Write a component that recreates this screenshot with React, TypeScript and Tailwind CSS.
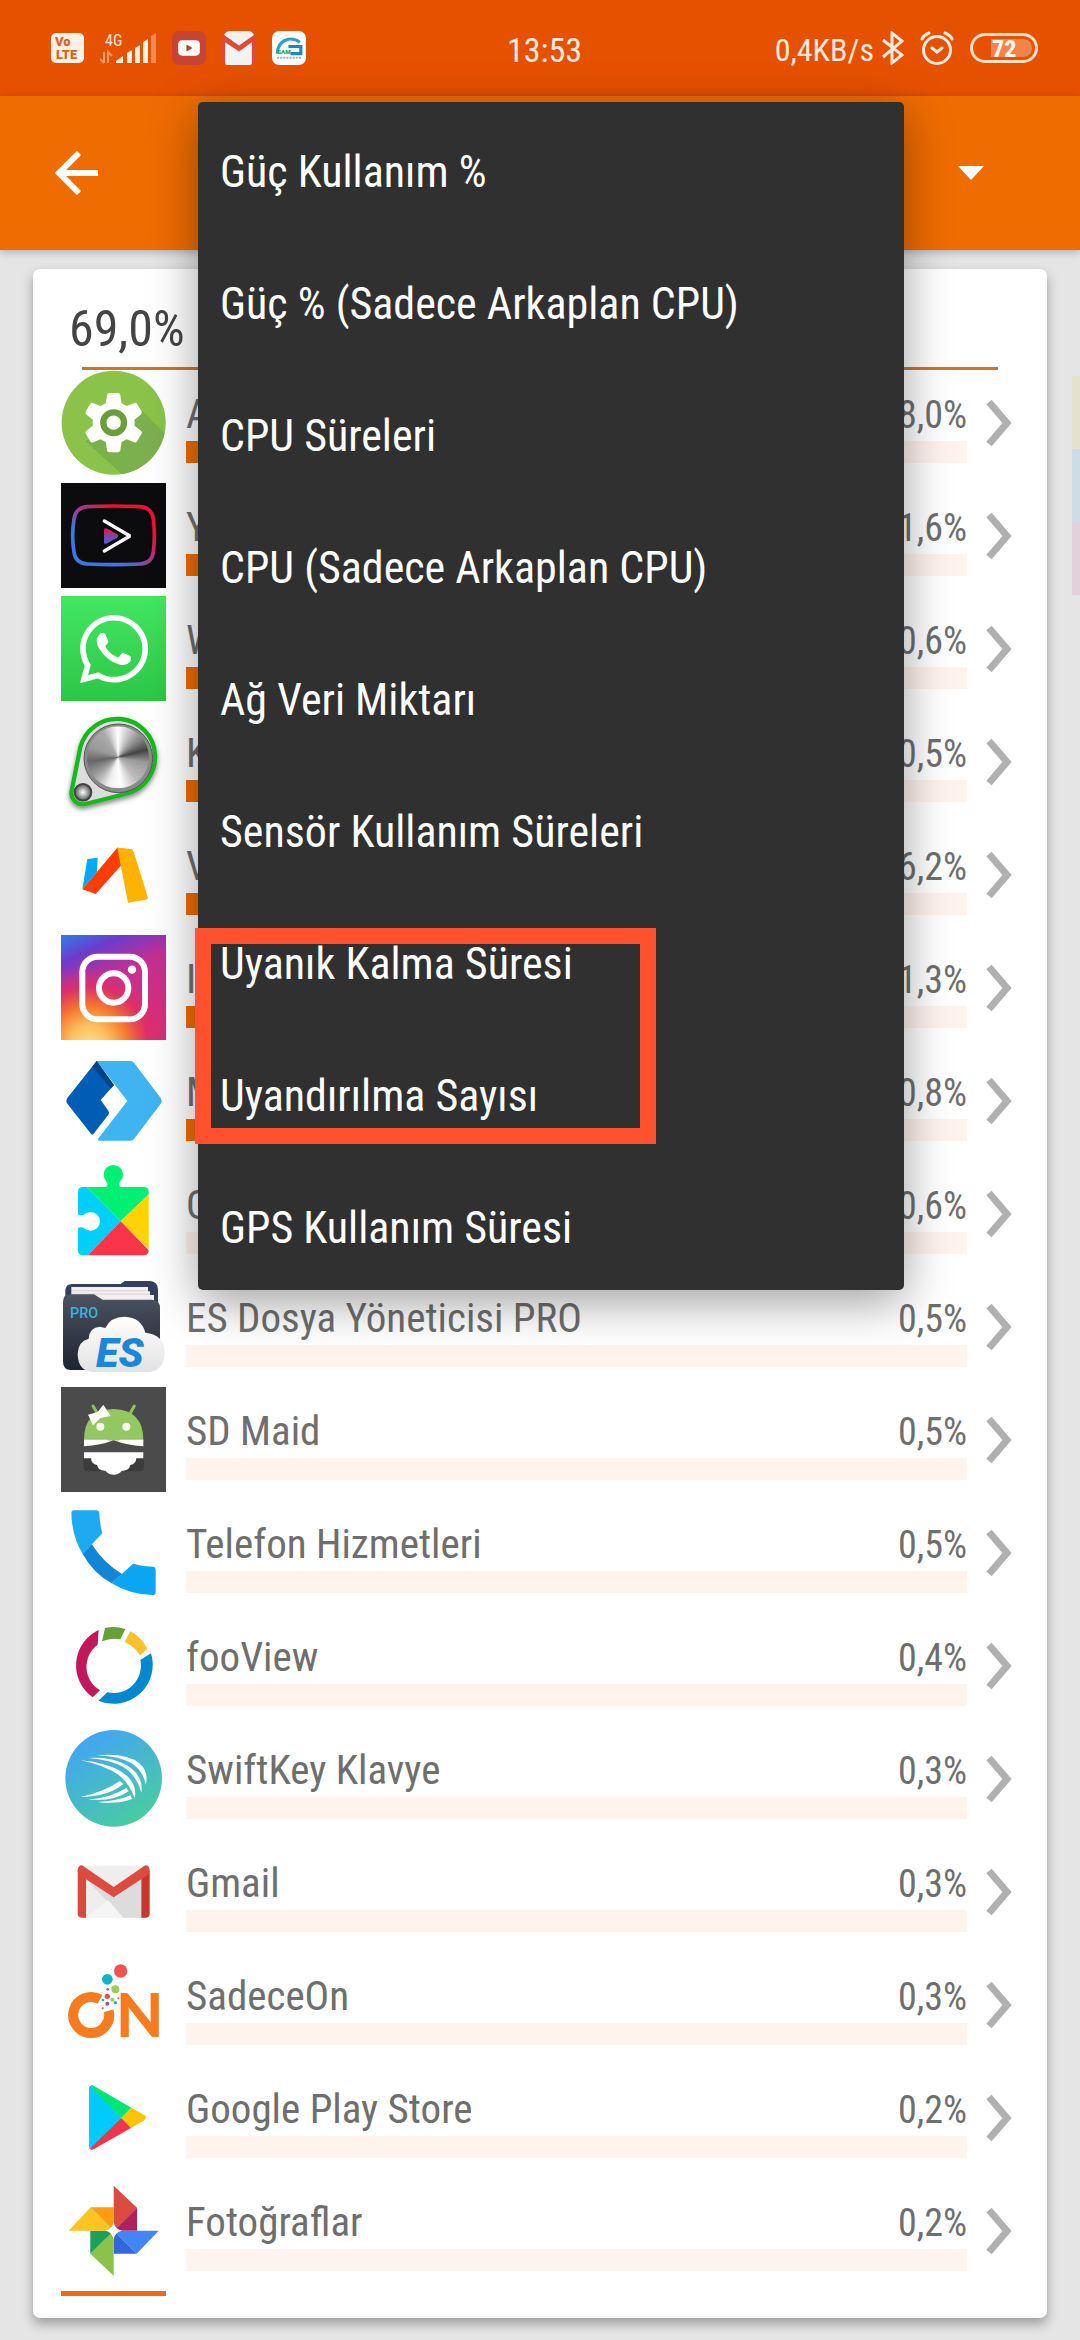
import { ReactNode } from "react";
import { FaWhatsapp } from "react-icons/fa";

interface AppUsage {
    name: string;
    percent: string;
    bar: number;
    icon: ReactNode;
}

function Icon({ y, children }: { y: number; children: ReactNode }) {
    return (
        <svg className="size-[105px] shrink-0" viewBox={`183 ${y} 315 315`} aria-hidden="true">
            {children}
        </svg>
    );
}

const SettingsIcon = (
    <Icon y={360}>
        <defs>
            <clipPath id="gear-clip"><circle cx="341" cy="518" r="156" /></clipPath>
        </defs>
        <circle cx="341" cy="518" r="156" fill="#8bc34a" />
        <path d="M424 480 L540 596 L430 730 L256 574 Z" fill="#7cb04c" clipPath="url(#gear-clip)" />
        <g fill="#fff">
            <circle cx="341" cy="518" r="63" />
            {[0, 60, 120, 180, 240, 300].map(a => (
                <path key={a} d="M328 429 H354 Q360 429 361 435 L366 470 H316 L321 435 Q322 429 328 429 Z" transform={`rotate(${a} 341 518)`} />
            ))}
        </g>
        <circle cx="341" cy="518" r="31" fill="#fff" stroke="#689f38" strokeWidth="19" />
    </Icon>
);

const VancedIcon = (
    <Icon y={699}>
        <defs>
            <linearGradient id="vanced" x1="0" y1="1" x2="1" y2="0">
                <stop offset="0.3" stopColor="#3b78e7" />
                <stop offset="0.5" stopColor="#9b3d92" />
                <stop offset="0.75" stopColor="#ee1133" />
            </linearGradient>
            <linearGradient id="vanced-play" x1="0" y1="1" x2="0" y2="0">
                <stop offset="0.1" stopColor="#3f62e0" />
                <stop offset="0.9" stopColor="#d81f55" />
            </linearGradient>
        </defs>
        <rect x="183" y="699" width="315" height="315" fill="#0c0c0f" />
        <path d="M262 770 Q341 766 420 770 Q456 773 460 808 Q466 857 460 906 Q456 940 420 942 Q341 946 262 942 Q226 940 222 906 Q214 857 222 808 Q226 773 262 770 Z" fill="none" stroke="url(#vanced)" strokeWidth="11" />
        <path d="M312 838 Q314 832 322 836 L352 853 Q357 858 352 863 L322 880 Q314 884 312 878 Z" fill="url(#vanced-play)" />
        <path d="M313 813 L390 858 L313 903" fill="none" stroke="#fff" strokeWidth="10" strokeLinecap="round" strokeLinejoin="bevel" />
    </Icon>
);

const WhatsAppIcon = (
    <div className="flex size-[105px] shrink-0 items-center justify-center bg-linear-to-b from-[#43e760] to-[#2bc746]">
        <FaWhatsapp className="size-[78px] text-white" aria-hidden="true" />
    </div>
);

const KnobIcon = (
    <Icon y={27}>
        <defs>
            <filter id="knob-shadow" x="-20%" y="-20%" width="140%" height="140%">
                <feDropShadow dx="0" dy="8" stdDeviation="8" floodColor="#000" floodOpacity="0.5" />
            </filter>
            <radialGradient id="knob-small">
                <stop offset="0" stopColor="#ffffff" />
                <stop offset="1" stopColor="#555555" />
            </radialGradient>
        </defs>
        <path d="M241 142 A114 114 0 1 1 375 282 L256 312 A34 34 0 0 1 215 272 Z" fill="#dddddd" stroke="#18b81c" strokeWidth="13" filter="url(#knob-shadow)" />
        <circle cx="355" cy="175" r="103" fill="#8a8a8a" stroke="#555" strokeWidth="3" />
        <foreignObject x="261" y="79" width="186" height="186">
            <div className="size-[186px] rounded-full bg-[conic-gradient(#fff_0deg,#ccc_20deg,#888_50deg,#444_75deg,#999_100deg,#bbb_140deg,#fff_175deg,#eee_200deg,#aaa_225deg,#666_262deg,#999_290deg,#aaa_330deg,#fff_360deg)]" />
        </foreignObject>
        <circle cx="249" cy="277" r="25" fill="url(#knob-small)" stroke="#444" strokeWidth="6" />
    </Icon>
);

const RibbonIcon = (
    <Icon y={366}>
        <path d="M262 477 L293 473 L291 516 L247 568 Z" fill="#03a9f4" />
        <path d="M352 443 L394 449 V462 L287 582 L247 568 Z" fill="#ff3d00" />
        <path d="M352 443 L391 447 Q398 448 401 455 L443 590 Q445 598 437 599 L384 608 Z" fill="#ffb300" />
    </Icon>
);

const InstagramIcon = (
    <Icon y={705}>
        <defs>
            <linearGradient id="insta-base" x1="0" y1="0" x2="0.45" y2="1">
                <stop offset="0" stopColor="#2f7fe8" />
                <stop offset="0.22" stopColor="#6a3ccc" />
                <stop offset="0.5" stopColor="#c42f93" />
                <stop offset="1" stopColor="#d92e7b" />
            </linearGradient>
            <radialGradient id="insta-warm" cx="0.27" cy="1.05" r="0.75">
                <stop offset="0" stopColor="#ffe08a" />
                <stop offset="0.25" stopColor="#fdbf5f" />
                <stop offset="0.5" stopColor="#f5772e" />
                <stop offset="0.75" stopColor="#e03060" stopOpacity="0.8" />
                <stop offset="1" stopColor="#d92e7b" stopOpacity="0" />
            </radialGradient>
        </defs>
        <rect x="183" y="705" width="315" height="315" fill="url(#insta-base)" />
        <rect x="183" y="705" width="315" height="315" fill="url(#insta-warm)" />
        <rect x="247" y="770" width="188" height="188" rx="46" fill="none" stroke="#fff" strokeWidth="18" />
        <circle cx="341" cy="864" r="44" fill="none" stroke="#fff" strokeWidth="18" />
        <circle cx="396" cy="809" r="12.5" fill="#fff" />
    </Icon>
);

const LauncherIcon = (
    <Icon y={1044}>
        <path d="M290 1083 H392 Q398 1083 402 1088 L482 1194 Q488 1203 482 1211 L402 1317 Q398 1322 392 1322 H298 Q290 1322 296 1314 L382 1203 Z" fill="#3fb4f0" />
        <path d="M290 1083 L342 1155 L302 1200 L325 1232 Q329 1238 325 1244 L281 1301 Q277 1306 273 1301 L202 1211 Q196 1203 202 1194 Z" fill="#005db4" />
        <path d="M290 1083 L342 1155 L333 1165 L277 1100 Z" fill="#004488" />
    </Icon>
);

const PlayServicesIcon = (
    <Icon y={3}>
        <defs>
            <clipPath id="puzzle"><rect x="234" y="81" width="212" height="205" rx="14" /></clipPath>
        </defs>
        <g clipPath="url(#puzzle)">
            <path d="M234 55 L362 184 L234 316 Z" fill="#00cffb" />
            <path d="M234 55 V81 H460 V90 L362 184 Z" fill="#00f076" />
            <path d="M468 82 V290 L362 184 Z" fill="#ffd200" />
            <path d="M234 316 H490 L362 184 Z" fill="#fa3549" />
        </g>
        <circle cx="340" cy="44" r="29" fill="#00f076" />
        <path d="M319 60 H361 Q352 76 366 84 H314 Q328 76 319 60 Z" fill="#00f076" />
        <circle cx="272" cy="184" r="28" fill="#fff" />
        <path d="M226 160 Q246 172 258 160 V208 Q246 196 226 208 Z" fill="#fff" />
    </Icon>
);

const EsIcon = (
    <Icon y={342}>
        <defs>
            <linearGradient id="es-folder" x1="0" y1="0" x2="0" y2="1">
                <stop offset="0" stopColor="#4c5361" />
                <stop offset="1" stopColor="#1e2430" />
            </linearGradient>
            <linearGradient id="es-cloud" x1="0" y1="0" x2="0" y2="1">
                <stop offset="0" stopColor="#ffffff" />
                <stop offset="1" stopColor="#e2e2e4" />
            </linearGradient>
        </defs>
        <path d="M196 440 V390 Q198 372 216 372 H362 L374 363 H450 Q474 364 474 390 V450 Z" fill="#333f5c" />
        <path d="M214 381 H444 V394 H450 V405 H462 V430 H214 Z" fill="#f2eff0" />
        <path d="M216 392 H444 M216 402 H450" stroke="#cfc9cc" strokeWidth="2" />
        <path d="M189 425 Q190 403 208 403 H282 L308 419 H456 Q480 420 480 444 V600 Q480 630 456 630 H212 Q189 630 189 604 Z" fill="url(#es-folder)" />
        <path d="M280 636 Q234 634 233 582 Q234 544 266 536 Q268 502 300 500 Q310 502 316 504 Q332 470 374 470 Q424 472 436 518 Q494 524 494 578 Q492 632 446 636 Z" fill="url(#es-cloud)" />
        <text x="210" y="474" fontSize="43" fontWeight="500" fill="#3db2dc" fontFamily="Roboto, sans-serif">PRO</text>
        <text x="288" y="620" fontSize="124" fontWeight="900" fontStyle="italic" fill="#1b87d6" fontFamily="Roboto, sans-serif">ES</text>
    </Icon>
);

const SdMaidIcon = (
    <Icon y={681}>
        <rect x="183" y="681" width="315" height="315" fill="#4b4b4b" />
        <path d="M279 738 L292 760 M403 738 L388 764" stroke="#8fc45c" strokeWidth="9" strokeLinecap="round" />
        <path d="M252 840 Q252 750 341 747 Q430 750 430 840 Z" fill="#93c761" />
        <circle cx="301" cy="800" r="12" fill="#f4f8ee" />
        <circle cx="379" cy="800" r="12" fill="#f4f8ee" />
        <path d="M264 764 L293 756 L310 734 L332 768 L301 774 L279 796 Z" fill="#fff" />
        <path d="M252 839 H320 Q334 842 341 839 Q348 842 362 839 H430 V859 Q380 856 341 841 Q302 856 252 859 Z" fill="#fff" />
        <path d="M250 894 H432 V920 Q430 934 416 934 H266 Q252 934 250 920 Z" fill="#3c3c3c" />
        <path d="M252 877 H430 V895 H409 Q408 912 391 915 Q386 934 366 932 Q356 944 341 944 Q326 944 316 932 Q296 934 291 915 Q274 912 273 895 H252 Z" fill="#fff" />
    </Icon>
);

const PhoneIcon = (
    <Icon y={1020}>
        <path d="M248 1182 L275 1152 Q310 1208 366 1242 L335 1270 Q280 1240 248 1182 Z" fill="#1186d6" />
        <path d="M222 1051 H290 Q297 1051 298 1059 Q299 1090 307 1120 L248 1182 Q216 1130 214 1060 Q214 1051 222 1051 Z" fill="#1eaaf1" />
        <path d="M335 1270 L399 1211 Q428 1220 460 1220 Q467 1221 467 1229 V1297 Q467 1305 459 1305 Q390 1304 335 1270 Z" fill="#0aa6f4" />
    </Icon>
);

const FooViewIcon = (
    <Icon y={39}>
        <path d="M296 90 L293 134 A82 82 0 0 0 300 271 L278 292 A117 117 0 0 1 296 90 Z" fill="#c2185b" />
        <path d="M315 84 Q345 76 376 87 L361 118 Q335 112 306 124 Z" fill="#689f38" />
        <path d="M391 94 Q424 110 442 147 L420 166 Q404 140 374 126 Z" fill="#fbc02d" />
        <path d="M453 160 A117 117 0 0 1 295 302 L322 277 A82 82 0 0 0 421 180 Z" fill="#0288d1" />
    </Icon>
);

const SwiftKeyIcon = (
    <Icon y={378}>
        <defs>
            <linearGradient id="swift" x1="0.2" y1="0" x2="0.8" y2="1">
                <stop offset="0.1" stopColor="#43a7f0" />
                <stop offset="1" stopColor="#48cf9a" />
            </linearGradient>
        </defs>
        <circle cx="341" cy="535" r="145" fill="url(#swift)" />
        <g fill="#fff">
            <path d="M290 466 Q380 458 418 490 Q448 516 437 554 Q430 514 398 492 Q364 470 290 466 Z" />
            <path d="M264 474 Q340 470 384 498 Q432 530 424 578 Q412 530 372 502 Q334 480 264 474 Z" />
            <path d="M242 481 Q320 488 366 516 Q414 548 404 596 Q390 550 352 522 Q306 494 242 481 Z" />
            <path d="M242 591 Q310 576 360 543 L370 552 Q324 590 242 591 Z" />
            <path d="M264 599 Q330 594 380 564 L386 574 Q340 606 264 599 Z" />
            <path d="M292 606 Q350 604 392 586 L396 597 Q350 614 292 606 Z" />
        </g>
    </Icon>
);

const GmailIcon = (
    <Icon y={717}>
        <path d="M246 797 H436 V953 H246 Z" fill="#eeeeee" />
        <path d="M258 838 L341 890 L424 838 V953 H370 Z" fill="#dcdcdc" />
        <path d="M258 953 L324 900 L370 953 Z" fill="#f5f5f5" />
        <path d="M233 810 L258 836 V953 H244 Q233 952 233 942 Z" fill="#d84a3f" />
        <path d="M449 810 L424 836 V953 H438 Q449 952 449 942 Z" fill="#c5392d" />
        <path d="M233 810 Q234 796 246 796 L341 861 L436 796 Q448 796 449 810 Q449 822 440 827 L341 892 L242 827 Q233 822 233 810 Z" fill="#dd4b3e" />
    </Icon>
);

const SadeceOnIcon = (
    <Icon y={1056}>
        <path d="M300 1198 A54 54 0 1 0 326 1232" fill="none" stroke="#f47b20" strokeWidth="30" />
        <text x="348" y="1312" fontSize="184" fontWeight="900" fill="#f47b20" fontFamily="Lato, sans-serif">N</text>
        <circle cx="362" cy="1113" r="20" fill="#ee5253" />
        <circle cx="322" cy="1138" r="16" fill="#0fb5c4" />
        <circle cx="346" cy="1168" r="12" fill="#9ccb5a" />
        <circle cx="322" cy="1189" r="8" fill="#ee4a5a" />
        <circle cx="337" cy="1199" r="6" fill="#9ccb5a" />
        <circle cx="322" cy="1211" r="6" fill="#8a56a5" />
        <circle cx="346" cy="1208" r="5" fill="#0fb5c4" />
        <circle cx="323" cy="1168" r="4" fill="#8a56a5" />
        <circle cx="309" cy="1200" r="4" fill="#0fb5c4" />
        <circle cx="355" cy="1195" r="3" fill="#ee4a5a" />
        <circle cx="308" cy="1225" r="3" fill="#ee4a5a" />
    </Icon>
);

const PlayStoreIcon = (
    <Icon y={75}>
        <path d="M267 144 Q268 136 278 136 L364 234 L276 329 Q267 328 267 318 Z" fill="#00cbfc" />
        <path d="M270 139 Q275 134 282 138 L394 203 L364 234 Z" fill="#00e676" />
        <path d="M394 203 L434 226 Q442 233 434 240 L393 264 L364 234 Z" fill="#ffc400" />
        <path d="M393 264 L282 327 Q275 331 270 326 L364 234 Z" fill="#f0354b" />
    </Icon>
);

const PhotosIcon = (
    <Icon y={414}>
        <path d="M341 437 L411 503 L341 572 Z" fill="#dc4b3f" />
        <path d="M411 503 V572 H341 Z" fill="#b0205c" />
        <path d="M476 572 L410 641 L341 572 Z" fill="#4285f4" />
        <path d="M341 572 L410 641 H341 Z" fill="#3367d6" />
        <path d="M341 707 L271 641 L341 572 Z" fill="#8bc34a" />
        <path d="M271 641 V572 H341 Z" fill="#1b9f5a" />
        <path d="M206 572 L272 502 L341 572 Z" fill="#fcc322" />
        <path d="M272 502 H341 V572 Z" fill="#ff9a12" />
        <path d="M341 546 Q345 568 366 572 Q345 576 341 598 Q337 576 316 572 Q337 568 341 546 Z" fill="#fff" />
    </Icon>
);

const apps: AppUsage[] = [
    { name: "Android", percent: "28,0%", bar: 28, icon: SettingsIcon },
    { name: "YouTube", percent: "11,6%", bar: 12, icon: VancedIcon },
    { name: "WhatsApp", percent: "10,6%", bar: 11, icon: WhatsAppIcon },
    { name: "Knob", percent: "10,5%", bar: 11, icon: KnobIcon },
    { name: "Via", percent: "6,2%", bar: 6, icon: RibbonIcon },
    { name: "Instagram", percent: "1,3%", bar: 2, icon: InstagramIcon },
    { name: "Microsoft", percent: "0,8%", bar: 2, icon: LauncherIcon },
    { name: "Google", percent: "0,6%", bar: 0, icon: PlayServicesIcon },
    { name: "ES Dosya Yöneticisi PRO", percent: "0,5%", bar: 0, icon: EsIcon },
    { name: "SD Maid", percent: "0,5%", bar: 0, icon: SdMaidIcon },
    { name: "Telefon Hizmetleri", percent: "0,5%", bar: 0, icon: PhoneIcon },
    { name: "fooView", percent: "0,4%", bar: 0, icon: FooViewIcon },
    { name: "SwiftKey Klavye", percent: "0,3%", bar: 0, icon: SwiftKeyIcon },
    { name: "Gmail", percent: "0,3%", bar: 0, icon: GmailIcon },
    { name: "SadeceOn", percent: "0,3%", bar: 0, icon: SadeceOnIcon },
    { name: "Google Play Store", percent: "0,2%", bar: 0, icon: PlayStoreIcon },
    { name: "Fotoğraflar", percent: "0,2%", bar: 0, icon: PhotosIcon },
];

const metrics = [
    "Güç Kullanım %",
    "Güç % (Sadece Arkaplan CPU)",
    "CPU Süreleri",
    "CPU (Sadece Arkaplan CPU)",
    "Ağ Veri Miktarı",
    "Sensör Kullanım Süreleri",
    "Uyanık Kalma Süresi",
    "Uyandırılma Sayısı",
    "GPS Kullanım Süresi",
];

function StatusBar() {
    return (
        <div className="grid h-24 grid-cols-[1fr_auto_1fr] items-center bg-[#e65100] pr-[42px] pl-[51px] text-[#ffe9dc]">
            <div className="flex items-center gap-4">
                <svg className="h-[30px] w-[33px]" viewBox="0 0 33 30" aria-label="VoLTE">
                    <rect width="33" height="30" rx="5" fill="#fff0e6" />
                    <text x="4" y="13" fontSize="13" fontWeight="900" fill="#e0601c" fontFamily="Roboto, sans-serif">Vo</text>
                    <text x="5" y="26" fontSize="13" fontWeight="900" fill="#e0601c" fontFamily="Roboto, sans-serif">LTE</text>
                </svg>
                <svg className="h-[32px] w-[56px]" viewBox="0 -2 56 32" aria-label="4G">
                    <text x="5" y="12" fontSize="16" fill="#ffe9dc" fontFamily="'Roboto Condensed', sans-serif">4G</text>
                    <path d="M4 18 V29 M4 29 L0 25 M8 29 V18 L12 22" stroke="#f59b6a" strokeWidth="2" fill="none" />
                    <path d="M16 29 V27 L23 22 V29 Z M27 29 V19 L32 16 V29 Z M35 29 V14 L40 11 V29 Z M43 29 V8 L48 5 V29 Z" fill="#fff0e6" />
                    <path d="M51 29 V2 L56 -1 V29 Z" fill="#f28a52" />
                </svg>
                <svg className="size-[34px]" viewBox="0 0 33 33" aria-hidden="true">
                    <rect width="33" height="33" rx="7" fill="#c84432" />
                    <rect x="6" y="9" width="21" height="15" rx="4" fill="#fff" />
                    <path d="M14 13 L20 16.5 L14 20 Z" fill="#b84030" />
                </svg>
                <svg className="size-[34px]" viewBox="0 0 33 33" aria-hidden="true">
                    <rect width="33" height="33" rx="7" fill="#dd4b35" />
                    <path d="M3 11 L16.5 20 L29 11 V31 Q29 33 27 33 H5 Q3 33 3 31 Z" fill="#f2f2f2" />
                    <path d="M2 4 Q4 0 8 0 H26 Q29 0 31 4 L16.5 14 Z" fill="#f2f2f2" />
                </svg>
                <svg className="size-[34px]" viewBox="0 0 33 33" aria-hidden="true">
                    <rect width="33" height="33" rx="7" fill="#fff" />
                    <path d="M27 11 Q22 7 16 8 Q6 10 5 22" fill="none" stroke="#2f9fc4" strokeWidth="3" />
                    <path d="M16 15 H28 V22 H18" fill="none" stroke="#2486b4" strokeWidth="3" />
                    <text x="5" y="22" fontSize="6" fontWeight="900" fill="#1fa055" fontFamily="Roboto, sans-serif">SAM</text>
                    <path d="M5 26 H28" stroke="#9bb3c0" strokeWidth="2" strokeDasharray="2 1" />
                </svg>
            </div>
            <span className="pt-1 text-[34px] leading-10">13:53</span>
            <div className="flex items-center justify-end gap-4">
                <div className="flex items-center gap-2">
                    <span className="pt-1 text-[32px] leading-10">0,4KB/s</span>
                    <svg className="h-[34px] w-[22px]" viewBox="0 0 22 34" fill="none" stroke="currentColor" strokeWidth="3" aria-label="Bluetooth">
                        <path d="M1 9 L20 24 L10 32 V2 L20 10 L1 26" />
                    </svg>
                </div>
                <svg className="size-[34px]" viewBox="0 0 34 34" fill="none" stroke="currentColor" strokeWidth="3" strokeLinecap="round" aria-label="Alarm">
                    <circle cx="17" cy="19" r="13.5" />
                    <path d="M12 17 L17 21 L22 17 M2 8 Q4 4 9 2 M32 8 Q30 4 25 2" />
                </svg>
                <svg className="h-[30px] w-[68px]" viewBox="0 0 68 30" aria-label="72">
                    <rect x="1.5" y="1.5" width="65" height="27" rx="13.5" fill="none" stroke="#ffdfc4" strokeWidth="3" />
                    <path d="M21 6 H54 Q62 7 62 15 Q62 23 54 24 H21 Z" fill="#f2834a" />
                    <text x="22" y="24" fontSize="24" fontWeight="800" fill="#fff3ea" fontFamily="'Roboto Condensed', sans-serif">72</text>
                </svg>
            </div>
        </div>
    );
}

function MetricMenu() {
    return (
        <div className="absolute top-[102px] right-[176px] left-[198px] z-20 rounded-[5px] bg-[#303030] shadow-[0_12px_48px_rgba(0,0,0,0.38)]">
            <ul>
                {metrics.map(metric => (
                    <li key={metric}>
                        <button className="flex h-[132px] w-full items-center px-[22px] pt-2 text-left text-[44px] whitespace-nowrap text-white">
                            {metric}
                        </button>
                    </li>
                ))}
            </ul>
            <div className="pointer-events-none absolute top-[826px] -left-[3px] h-[216px] w-[461px] border-[16px] border-[#ff512d]" />
        </div>
    );
}

function AppRow({ app }: { app: AppUsage }) {
    return (
        <li className="flex h-[105px] items-center">
            {app.icon}
            <div className="ml-5 h-full flex-1 pt-[18px]">
                <div className="flex h-[53px] items-baseline justify-between text-[#6e6e6e]">
                    <span className="text-[41px] leading-[53px]">{app.name}</span>
                    <span className="text-[38px] leading-[53px]">{app.percent}</span>
                </div>
                <div className="h-[22px] bg-[#fff3ee]">
                    <div className="h-full bg-[#ef6c00]" style={{ width: `${app.bar}%` }} />
                </div>
            </div>
            <svg className="ml-[19px] h-[48px] w-[26px]" viewBox="0 0 26 48" fill="none" stroke="#b0b0b0" strokeWidth="7" aria-hidden="true">
                <path d="M3 3 L21 24 L3 45" />
            </svg>
        </li>
    );
}

export default function App() {
    return (
        <div className="relative min-h-screen overflow-hidden bg-[#e5e5e5] pb-[22px] font-['Roboto_Condensed',Roboto,sans-serif]">
            <StatusBar />
            <header className="flex h-[154px] items-center justify-between bg-[#ef6c00] pr-[96px] pl-[55px] shadow-[0_2px_8px_rgba(0,0,0,0.25)]">
                <button aria-label="Geri">
                    <svg className="size-[44px]" viewBox="0 0 44 44" fill="none" stroke="#fff" strokeWidth="6" aria-hidden="true">
                        <path d="M43 22 H4 M24 2 L4 22 L24 42" />
                    </svg>
                </button>
                <button aria-label="Menü">
                    <svg className="h-[14px] w-[26px]" viewBox="0 0 26 14" aria-hidden="true">
                        <path d="M0 0 H26 L13 14 Z" fill="#fff" />
                    </svg>
                </button>
            </header>

            <MetricMenu />

            {/* Edge tabs */}
            <div className="absolute top-[376px] right-0 w-2">
                <div className="h-[73px] bg-[#e6e1cf]" />
                <div className="h-[73px] bg-[#cddce5]" />
                <div className="h-[73px] bg-[#e2d0da]" />
            </div>

            <main className="mx-[33px] mt-[19px] rounded-[7px] bg-white pb-[22px] shadow-[0_6px_12px_rgba(0,0,0,0.32)]">
                <h1 className="flex h-[98px] items-center pt-[22px] pl-9 text-[50px] text-[#444444]">69,0%</h1>
                <div className="mx-[49px] h-[3px] bg-[#d4741f]" />
                <ul className="flex flex-col gap-2 pr-[35px] pl-7">
                    {apps.map(app => (
                        <AppRow key={app.name} app={app} />
                    ))}
                    <li className="h-[5px] w-[105px] bg-[#f06a15]" />
                </ul>
            </main>
        </div>
    );
}
